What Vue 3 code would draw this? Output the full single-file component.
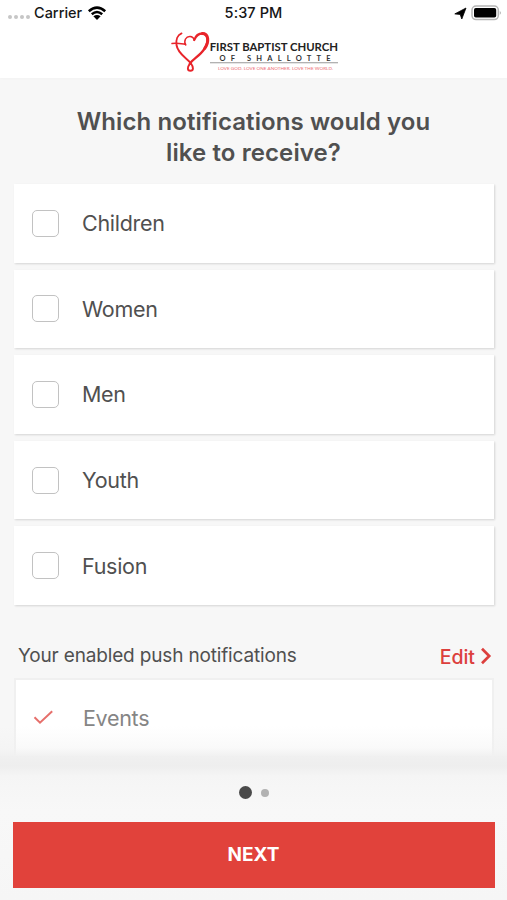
<script setup>
const groups = ['Children', 'Women', 'Men', 'Youth', 'Fusion']
</script>

<template>
  <main class="screen">
    <header class="header">
      <div class="status">
        <div class="carrier">
          <span class="signal"><i v-for="n in 4" :key="n"></i></span>
          <span class="carrier-name">Carrier</span>
          <svg class="wifi" width="20" height="15" viewBox="0 0 20 15">
            <path d="M1.8 5.2Q10-2 18.2 5.2M4.8 8.3Q10 3.8 15.2 8.3" fill="none" stroke="#000" stroke-width="2.5" />
            <path d="M6.4 10.3Q10 7.5 13.6 10.3L10 14Z" fill="#000" />
          </svg>
        </div>
        <time class="clock">5:37 PM</time>
        <div class="power">
          <svg width="13" height="13" viewBox="0 0 13 13"><path d="M.8 6.9 12 1 7.8 12 6.2 7.4Z" fill="#000" stroke="#000" stroke-width=".8" stroke-linejoin="round" /></svg>
          <svg width="31" height="16" viewBox="0 0 31 16">
            <rect x="1" y="1" width="26.3" height="13.6" rx="4" fill="#fff" stroke="#b5b5b5" stroke-width="1.5" />
            <rect x="3" y="3" width="22.2" height="9.6" rx="1.8" fill="#000" />
            <path d="M28.8 5.5q1.8 2.2 0 4.4z" fill="#999" />
          </svg>
        </div>
      </div>
      <svg class="logo" width="180" height="44" viewBox="0 0 180 44">
        <g fill="none" stroke="#e8242a" stroke-linecap="round" stroke-linejoin="round">
          <path d="M10.5 2.4C6.5 4 4.8 9 5.5 14C6.8 23 16 27 20 32.5C22.6 36 22.8 39.8 19.4 39.8C16 39.8 16.3 36 18.8 32.8" stroke-width="1.9" />
          <path d="M18.8 32.8C22 28 28.5 25 33 18.5C39 9.5 36.5 2.5 31.5 2.5C27 2.5 24.5 5.5 23.3 9" stroke-width="2.3" />
          <path d="M31.5 2.5C37.8 3 38.3 11 33.7 17.5" stroke-width="3" />
          <path d="M23.3 9C22 4.5 16.5 4.5 14.5 8C13.5 10 14 12.8 14.8 14M14.5 13.3C10 12.7 5 11.8 1 12.6" stroke-width="1.5" />
        </g>
        <text class="logo-title" x="38.7" y="20.1" textLength="128.3" lengthAdjust="spacingAndGlyphs">FIRST BAPTIST CHURCH</text>
        <text class="logo-place" x="48.5" y="29.6" textLength="111">OF SHALLOTTE</text>
        <path d="M39 31.7H167" stroke="#999" stroke-width="1.1" />
        <text class="logo-motto" x="47" y="38.6" textLength="115" lengthAdjust="spacingAndGlyphs">LOVE GOD. LOVE ONE ANOTHER. LOVE THE WORLD.</text>
      </svg>
    </header>

    <section class="content">
      <h1>Which notifications would you<br />like to receive?</h1>
      <div class="groups">
        <label v-for="group in groups" :key="group" class="card">
          <input type="checkbox" />
          <span>{{ group }}</span>
        </label>
      </div>
      <div class="enabled-head">
        <h2>Your enabled push notifications</h2>
        <a class="edit"><span>Edit</span>
          <svg width="12" height="18" viewBox="0 0 12 18"><path d="M2 1.8 9.2 9 2 16.2" fill="none" stroke="#dc3f3d" stroke-width="2.7" /></svg>
        </a>
      </div>
      <div class="enabled-card">
        <svg width="21" height="15" viewBox="0 0 21 15"><path d="M1.5 7.2 7 12.7 19.2 1.2" fill="none" stroke="#e66f6b" stroke-width="2" /></svg>
        <span>Events</span>
      </div>
    </section>

    <footer class="footer">
      <div class="pager"><i class="current"></i><i></i></div>
      <button>NEXT</button>
    </footer>
  </main>
</template>

<style>
body { margin: 0; background: #f7f7f7; }
</style>

<style scoped>
* { box-sizing: border-box; }
.screen {
  width: 507px;
  height: 900px;
  display: flex;
  flex-direction: column;
  overflow: hidden;
  background: #f7f7f7;
  color: #505050;
  font-family: Inter, "Liberation Sans", sans-serif;
}
.header { height: 78px; flex: none; background: #fff; box-shadow: 0 0 3px #eee; }
.status {
  height: 26px;
  display: grid;
  grid-template-columns: 1fr auto 1fr;
  align-items: center;
  color: #161616;
  font-size: 14.5px;
  font-weight: 500;
  line-height: 26px;
}
.carrier { display: flex; align-items: center; padding-left: 8px; }
.signal { display: flex; gap: 2px; margin-right: 4px; padding-top: 8px; }
.signal i { width: 4px; height: 4px; border-radius: 50%; background: #c6c6c6; }
.carrier-name { width: 49px; }
.wifi { margin-left: 4px; }
.clock { letter-spacing: .1px; }
.power { display: flex; justify-content: flex-end; align-items: center; gap: 4px; padding-right: 5px; }
.logo { display: block; margin: 5px 0 0 171px; }
.logo-title { font: 700 11px Lato, sans-serif; fill: #222; }
.logo-place { font: 700 7.5px Lato, sans-serif; fill: #333; }
.logo-motto { font: 400 4.6px Lato, sans-serif; fill: #ec6b70; }
.content { flex: 1; min-height: 0; padding: 28px 13px 0 14px; overflow: hidden; }
h1 { margin: 0; padding-right: 1px; text-align: center; font-size: 24px; line-height: 31px; font-weight: 600; letter-spacing: .1px; }
.groups { display: flex; flex-direction: column; gap: 7.1px; margin-top: 16px; }
.card {
  height: 78.5px;
  display: flex;
  align-items: center;
  gap: 23px;
  padding-left: 18px;
  background: #fff;
  box-shadow: 1px 1px 2px rgba(0, 0, 0, .14);
  font-size: 21.5px;
  letter-spacing: -.3px;
}
input { appearance: none; width: 27px; height: 27px; margin: 0; border: 1.5px solid #c2c2c2; border-radius: 5px; background: #fff; }
.enabled-head { height: 73px; display: flex; align-items: center; justify-content: space-between; padding: 29px 2px 0 4px; }
h2 { margin: 0; font-size: 19px; font-weight: 400; letter-spacing: -.16px; }
.edit { display: flex; align-items: center; gap: 5px; color: #dc3f3d; font-size: 19.5px; font-weight: 500; }
.edit span { padding-top: 2px; }
.enabled-card {
  height: 86px;
  display: flex;
  align-items: center;
  gap: 29px;
  margin-right: 0;
  padding: 0 0 6px 18px;
  background: #fff;
  border: 2px solid #f0f0f0;
  color: #858585;
  font-size: 21.5px;
  letter-spacing: -.3px;
}
.enabled-card svg { margin-left: -1px; }
.footer {
  position: relative;
  height: 144px;
  flex: none;
  padding: 30px 12px 12px 13px;
  background: linear-gradient(#f0f0f0, #eee 10px, #f5f5f5 20px, #f8f8f8 55px, #f6f6f6);
}
.footer::before {
  content: "";
  position: absolute;
  right: 0;
  bottom: 100%;
  left: 0;
  height: 30px;
  background: linear-gradient(rgba(241, 241, 241, 0), rgba(241, 241, 241, .4) 72%, #f1f1f1);
}
.pager { height: 13px; display: flex; align-items: center; justify-content: center; gap: 9px; padding-right: 1px; }
.pager i { width: 8px; height: 8px; border-radius: 50%; background: #b2b2b2; }
.pager .current { width: 13px; height: 13px; background: #4a4a4a; }
button {
  display: block;
  width: 482px;
  height: 66px;
  margin-top: 23px;
  padding: 0 1px 1px 0;
  border: 0;
  background: #e1423b;
  color: #fff;
  font: 700 19px Inter, sans-serif;
}
</style>
